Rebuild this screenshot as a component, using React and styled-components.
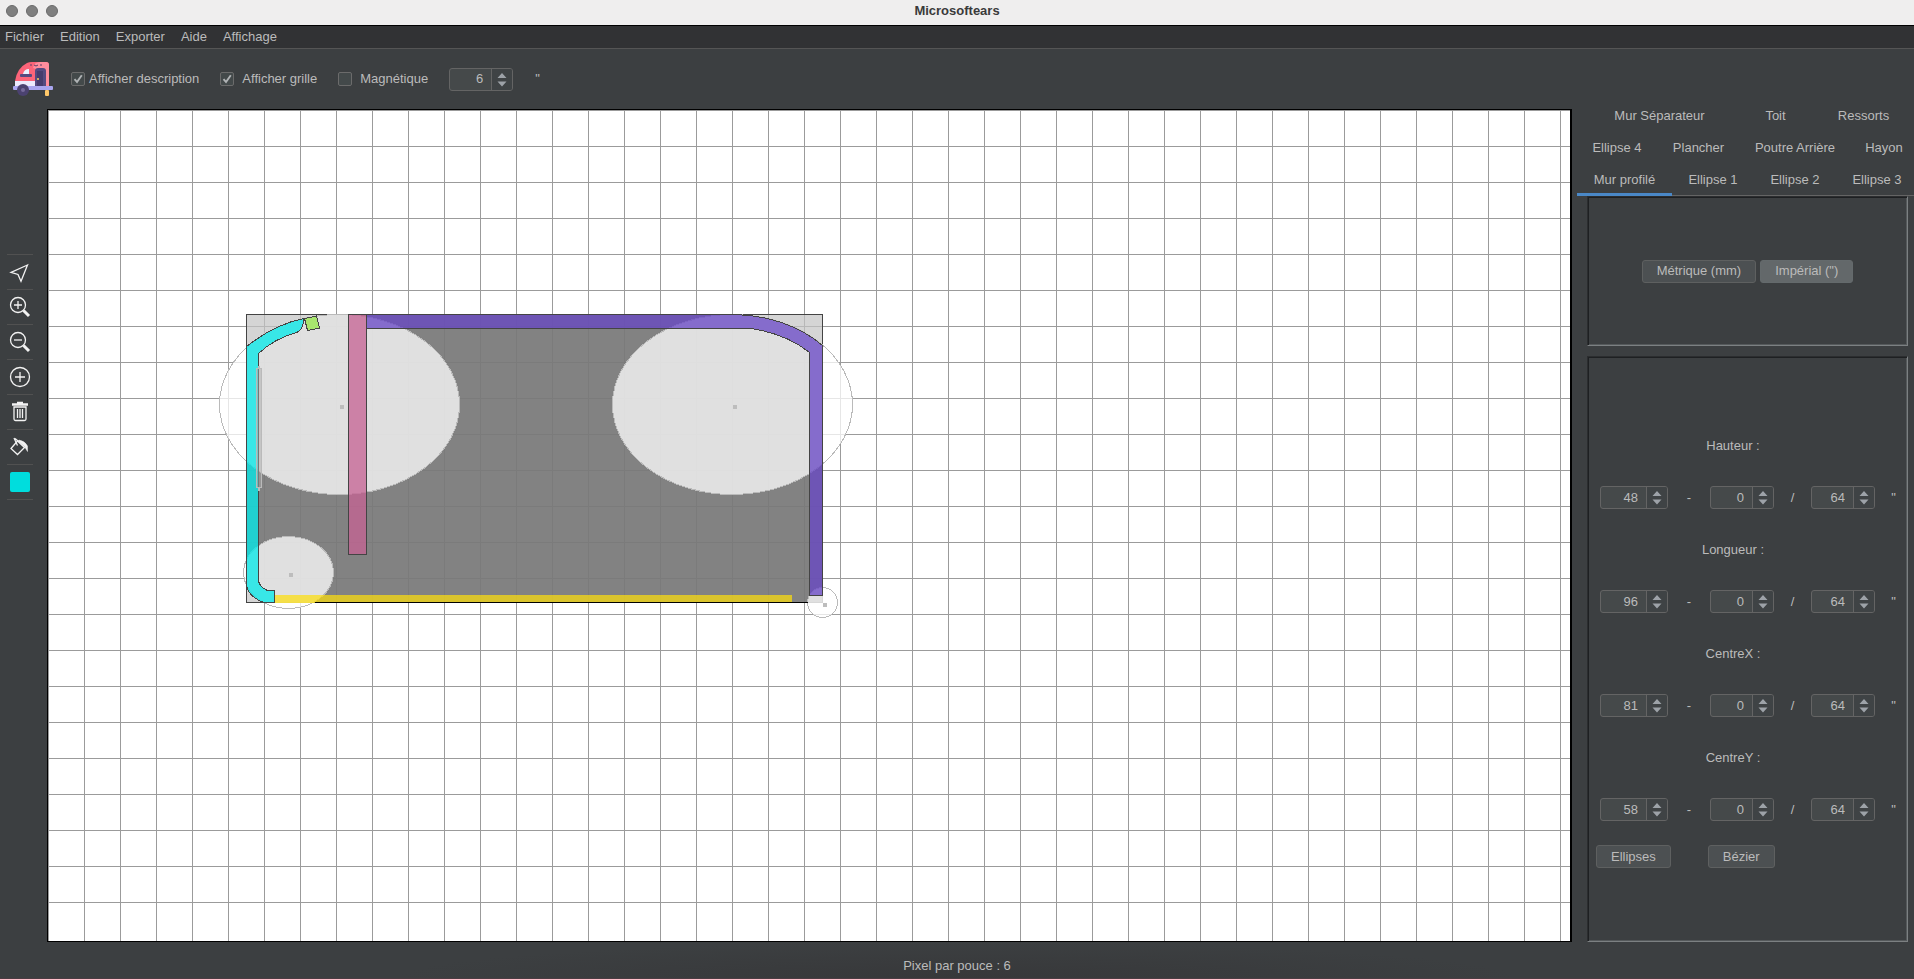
import React from "react";
import styled, { createGlobalStyle } from "styled-components";

const Global = createGlobalStyle`
  *, *::before, *::after { box-sizing: border-box; }
  html, body, #root { height: 100%; margin: 0; }
  body {
    background: #3c3f41;
    color: #bbbbbb;
    font: 13px/16px "Liberation Sans", Arial, sans-serif;
    overflow: hidden;
  }
  button, input { font: inherit; color: inherit; margin: 0; }
`;

const Window = styled.div`
  display: flex;
  flex-direction: column;
  min-height: 100vh;
  border-bottom: 1px solid #4a3c42;
`;

const TitleBar = styled.header`
  display: grid;
  grid-template-columns: 1fr auto 1fr;
  align-items: center;
  height: 26px;
  padding: 0 6px;
  padding-bottom: 3px;
  background: #efeeee;
  border-bottom: 1px solid #000;
`;

const Lights = styled.div`
  display: flex;
  gap: 8px;
`;

const Light = styled.button`
  width: 12px;
  height: 12px;
  padding: 0;
  border: 1px solid #6a6a6a;
  border-radius: 50%;
  background: #7f7f7f;
`;

const Title = styled.h1`
  margin: 0;
  color: #3a3a3a;
  font-size: 13px;
  line-height: 16px;
`;

const MenuBar = styled.nav`
  display: flex;
  gap: 16px;
  height: 23px;
  padding: 3px 5px;
  background: #313234;
  border-bottom: 1px solid #555555;
`;

const MenuItem = styled.button`
  padding: 0;
  border: 0;
  background: none;
  line-height: 16px;
`;

const Toolbar = styled.div`
  display: flex;
  align-items: center;
  height: 60px;
  padding-left: 12px;
`;

const Logo = styled.svg`
  width: 42px;
  height: 36px;
  margin-right: 17px;
`;

const CheckLabel = styled.label`
  display: flex;
  align-items: center;
  gap: ${(p) => p.$gap}px;
  margin-right: 21px;
`;

const CheckBox = styled.input`
  appearance: none;
  width: 14px;
  height: 14px;
  border: 1px solid #6b6b6b;
  border-radius: 2px;
  background: #43494a;
  &:checked {
    background: #43494a
      url("data:image/svg+xml,%3Csvg xmlns='http://www.w3.org/2000/svg' viewBox='0 0 12 12'%3E%3Cpath d='M2.5 6.2 5 9 9.8 2.2' fill='none' stroke='%23b0b3b5' stroke-width='1.9'/%3E%3C/svg%3E");
  }
`;

const Workspace = styled.main`
  display: flex;
  flex: 1;
`;

const Tools = styled.aside`
  display: flex;
  flex-direction: column;
  align-items: center;
  width: 47px;
  padding: 145px 14px 0 7px;
`;

const ToolButton = styled.button`
  display: grid;
  place-items: center;
  width: 26px;
  height: 35px;
  padding: 0;
  border: 0;
  border-top: 1px solid #515151;
  background: none;
  &:last-child {
    height: 36px;
    border-bottom: 1px solid #515151;
  }
`;

const ToolIcon = styled.svg`
  display: block;
  width: 22px;
  height: 22px;
  fill: none;
  stroke: #f2f2f2;
  stroke-width: 1.3;
`;

const Swatch = styled.span`
  width: 20px;
  height: 20px;
  border-radius: 2px;
  background: #00dddd;
`;

const Drawing = styled.section`
  display: flex;
  flex: 1;
  min-width: 0;
  border: 1px solid #000;
  border-right-width: 2px;
  padding-bottom: 4px;
  background:
    linear-gradient(to right, #9b9b9b 1px, transparent 1px) 0 0 / 36px 36px padding-box,
    linear-gradient(to bottom, #9b9b9b 1px, transparent 1px) 0 0 / 36px 36px content-box,
    #fff;
`;

const Plan = styled.svg`
  width: 100%;
  min-height: 500px;
`;

const SidePanel = styled.aside`
  display: flex;
  flex-direction: column;
  width: 342px;
  padding-left: 5px;
`;

const TabStrip = styled.div`
  margin: -9px -4px 0 0;
  border-bottom: 1px solid #646464;
`;

const TabRow = styled.div`
  display: flex;
  height: 32px;
  &:last-child { margin-bottom: -1px; }
`;

const Tab = styled.button`
  flex: ${(p) => p.$weight} 0 0;
  min-width: 0;
  padding: 3px 0 0;
  border: 0;
  border-bottom: 3px solid ${(p) => (p.$active ? "#4a88c7" : "transparent")};
  background: none;
  white-space: nowrap;
`;

const Panel = styled.section`
  display: flex;
  flex-direction: column;
  flex: ${(p) => (p.$fill ? "1" : "none")};
  margin: 0 6px ${(p) => (p.$fill ? 0 : 10)}px 10px;
  border: 1px solid;
  border-color: #2b2d2f #7c8082 #7c8082 #2b2d2f;
  box-shadow: inset 1px 1px 0 #1e2022, inset -1px -1px 0 #55595b;
`;

const UnitChoice = styled.div`
  display: flex;
  justify-content: center;
  align-items: center;
  gap: 4px;
  height: 148px;
`;

const Button = styled.button`
  height: 23px;
  padding: 0 14px;
  border: 1px solid ${(p) => (p.$selected ? "#646a6c" : "#5e6060")};
  border-radius: 3px;
  background: ${(p) => (p.$selected ? "#63686a" : "#4c5052")};
  line-height: 16px;
  white-space: nowrap;
`;

const FieldList = styled.div`
  display: flex;
  flex-direction: column;
  gap: 33px;
  padding: 81px 0 0 12px;
`;

const Field = styled.fieldset`
  margin: 0;
  padding: 0;
  border: 0;
`;

const Legend = styled.legend`
  padding: 0;
  margin-bottom: 32px;
`;

const FieldName = styled.span`
  display: block;
  width: 266px;
  text-align: center;
`;

const FieldRow = styled.div`
  display: grid;
  grid-template-columns: 68px 42px 64px 37px 64px 37px;
  align-items: center;
  text-align: center;
`;

const SpinBox = styled.span`
  display: flex;
  width: ${(p) => p.$width}px;
  height: 23px;
  border: 1px solid #646464;
  border-radius: 3px;
  background: #45494a;
  overflow: hidden;
`;

const SpinInput = styled.input`
  flex: 1;
  min-width: 0;
  padding: 0 8px 0 0;
  border: 0;
  outline: 0;
  background: none;
  text-align: right;
`;

const SpinArrows = styled.svg`
  width: 21px;
  height: 21px;
  border-left: 1px solid #646464;
  background: #3f4345;
  fill: #9da2a8;
`;

const UnitMark = styled.span`
  margin-left: 22px;
`;

const ButtonRow = styled.div`
  display: flex;
  gap: 37px;
  padding: 24px 0 0 8px;
`;

const StatusBar = styled.footer`
  height: 36px;
  padding-top: 16px;
  text-align: center;
  background: radial-gradient(ellipse 560px 36px at 50% 100%, #37383a, #3c3f41);
`;

function Spinner({ value, width = 64, label }) {
  return (
    <SpinBox $width={width}>
      <SpinInput type="text" inputMode="numeric" defaultValue={value} aria-label={label} />
      <SpinArrows viewBox="0 0 20 21" aria-hidden="true">
        <path d="M5.5 9 10 4 14.5 9ZM5.5 12.5H14.5L10 17.5Z" />
      </SpinArrows>
    </SpinBox>
  );
}

function Check({ children, gap = 8, checked }) {
  return (
    <CheckLabel $gap={gap}>
      <CheckBox type="checkbox" defaultChecked={checked} />
      {children}
    </CheckLabel>
  );
}

function Caravan() {
  return (
    <Logo viewBox="0 0 42 36" aria-hidden="true">
      <path d="M3 26V20Q5 7 15 2Q17 1 20 1H34Q37 1 37 4V26Z" fill="#fc6479" />
      <path d="M21 7Q22 1 28 1H34Q37 1 37 4V26H24V8Z" fill="#ff8d9d" />
      <path d="M3 20H24V26H3Z" fill="#eceafd" />
      <path d="M11 14V13Q12 8 17 8V14Z" fill="#e8f2ff" />
      <rect x="8" y="13" width="12" height="3" rx="1" fill="#554a80" />
      <path d="M23 26V10Q23 7 26 7H31Q34 7 34 10V26Z" fill="#554a80" />
      <rect x="25" y="10" width="6" height="16" fill="#463c6d" />
      <circle cx="26" cy="18" r="1" fill="#ffd15c" />
      <path d="M19 3V5M22 4Q24 6 26 4M29 3V5" fill="none" stroke="#5b4068" strokeWidth="1" />
      <rect x="1" y="25" width="40" height="4" rx="1" fill="#a9a5ef" />
      <rect x="33" y="29" width="4" height="6" rx="1" fill="#ffc869" />
      <circle cx="11" cy="29" r="6" fill="#4b4270" />
      <circle cx="11" cy="29" r="2" fill="#766b9b" />
    </Logo>
  );
}

const ellipses = [
  { cx: 291, cy: 294, rx: 120, ry: 90 },
  { cx: 684, cy: 294, rx: 120, ry: 90 },
  { cx: 240, cy: 462, rx: 45, ry: 36 },
  { cx: 774, cy: 492, rx: 15, ry: 15 },
];

function CaravanPlan() {
  return (
    <Plan role="img" aria-label="Plan de la caravane">
      <g transform="translate(0.5 0.5)" shapeRendering="crispEdges">
        <rect x="198" y="204" width="576" height="288" fill="#c4c4c4" fillOpacity="0.71" stroke="#444" />
        <path
          d="M198 236A120 90 0 0 1 291 204H684A120 90 0 0 1 774 235V492H215A45 36 0 0 1 198 475Z"
          fill="#686868"
          fillOpacity="0.76"
        />
        {ellipses.map((e) => (
          <g key={`${e.cx}-${e.cy}`}>
            <ellipse {...e} fill="#fff" fillOpacity="0.75" stroke="#bababa" />
            <rect x={e.cx} y={e.cy} width="4" height="4" fill="#bdbdbd" />
          </g>
        ))}
        <rect x="226" y="484" width="517" height="8" fill="#fedf0a" fillOpacity="0.71" />
        <path d="M266 492H759" stroke="#000" />
        <path
          d="M318 204H684A120 90 0 0 1 774 235V485H761V242A107 76 0 0 0 702 218H318Z"
          fill="#6745c5"
          fillOpacity="0.75"
          stroke="#444"
        />
        <rect x="300" y="204" width="18" height="240" fill="#c56193" fillOpacity="0.75" stroke="#444" />
        <path
          d="M198 236Q226 214 255 208Q255 220 248 222Q226 228 210 243V471Q212 477 219 480H226V492H215Q200 486 198 475Z"
          fill="#00eaea"
          fillOpacity="0.75"
          stroke="#444"
        />
        <path d="M256 208 268 205.500 271 217.500 259 220Z" fill="#a8e66e" stroke="#444" />
        <path d="M210 255V258M210 377V380" stroke="#bababa" strokeWidth="2" />
        <rect x="208" y="258" width="5" height="119" fill="#aaa" fillOpacity="0.5" stroke="#bababa" />
      </g>
    </Plan>
  );
}

const tools = [
  ["Sélection", <path d="M18.500 4 2 11.300 9 13.500 12 20.300Z" />],
  ["Zoom avant", <><circle cx="9" cy="9" r="7.500" /><path d="M5 9H13M9 5V13" /><path d="M14.500 14.500 20 20" strokeWidth="3" /></>],
  ["Zoom arrière", <><circle cx="9" cy="9" r="7.500" /><path d="M5 9H13" /><path d="M14.500 14.500 20 20" strokeWidth="3" /></>],
  ["Ajouter", <><circle cx="11" cy="11" r="9.500" /><path d="M6 11H16M11 6V16" /></>],
  ["Supprimer", <><path d="M3 3.500H19M8 2H14" strokeWidth="2.500" /><path d="M5 6V18Q5 19.500 6.500 19.500H15.500Q17 19.500 17 18V6Z" /><path d="M8.500 8V17M11 8V17M13.500 8V17" /></>],
  ["Remplir", <><path d="M8.500 5 2 12.500 8.500 18.500 15.500 11.500Z" /><path d="M5 2 8.500 9.500M6 2.500 9 5" /><path d="M10 4Q16 5 18.500 10V15.500L15.500 10.500 9 5Z" fill="#f2f2f2" strokeWidth="0.500" /></>],
];

const tabRows = [
  [["Mur Séparateur", 165], ["Toit", 67], ["Ressorts", 109]],
  [["Ellipse 4", 80], ["Plancher", 83], ["Poutre Arrière", 110], ["Hayon", 68]],
  [["Mur profilé", 95], ["Ellipse 1", 82], ["Ellipse 2", 82], ["Ellipse 3", 82]],
];

const fields = [["Hauteur", 48], ["Longueur", 96], ["CentreX", 81], ["CentreY", 58]];

export default function App() {
  return (
    <>
      <Global />
      <Window>
        <TitleBar>
          <Lights>
            <Light aria-label="Fermer" />
            <Light aria-label="Réduire" />
            <Light aria-label="Agrandir" />
          </Lights>
          <Title>Microsoftears</Title>
        </TitleBar>
        <MenuBar>
          {["Fichier", "Edition", "Exporter", "Aide", "Affichage"].map((m) => (
            <MenuItem key={m}>{m}</MenuItem>
          ))}
        </MenuBar>
        <Toolbar>
          <Caravan />
          <Check gap={4} checked>Afficher description</Check>
          <Check checked>Afficher grille</Check>
          <Check>Magnétique</Check>
          <Spinner value={6} label="Pas magnétique en pouces" />
          <UnitMark>"</UnitMark>
        </Toolbar>
        <Workspace>
          <Tools>
            {tools.map(([name, icon]) => (
              <ToolButton key={name} aria-label={name}>
                <ToolIcon viewBox="0 0 22 22">{icon}</ToolIcon>
              </ToolButton>
            ))}
            <ToolButton aria-label="Couleur"><Swatch /></ToolButton>
          </Tools>
          <Drawing><CaravanPlan /></Drawing>
          <SidePanel>
            <TabStrip role="tablist">
              {tabRows.map((row, i) => (
                <TabRow key={i}>
                  {row.map(([name, weight]) => (
                    <Tab
                      key={name}
                      role="tab"
                      $weight={weight}
                      $active={name === "Mur profilé"}
                      aria-selected={name === "Mur profilé"}
                    >
                      {name}
                    </Tab>
                  ))}
                </TabRow>
              ))}
            </TabStrip>
            <Panel>
              <UnitChoice>
                <Button>Métrique (mm)</Button>
                <Button $selected>Impérial (")</Button>
              </UnitChoice>
            </Panel>
            <Panel $fill>
              <FieldList>
                {fields.map(([name, value]) => (
                  <Field key={name}>
                    <Legend><FieldName>{name} :</FieldName></Legend>
                    <FieldRow>
                      <Spinner value={value} width={68} label={`${name}, pouces`} />
                      <span>-</span>
                      <Spinner value={0} label={`${name}, numérateur`} />
                      <span>/</span>
                      <Spinner value={64} label={`${name}, dénominateur`} />
                      <span>"</span>
                    </FieldRow>
                  </Field>
                ))}
              </FieldList>
              <ButtonRow>
                <Button>Ellipses</Button>
                <Button>Bézier</Button>
              </ButtonRow>
            </Panel>
          </SidePanel>
        </Workspace>
        <StatusBar>Pixel par pouce : 6</StatusBar>
      </Window>
    </>
  );
}
